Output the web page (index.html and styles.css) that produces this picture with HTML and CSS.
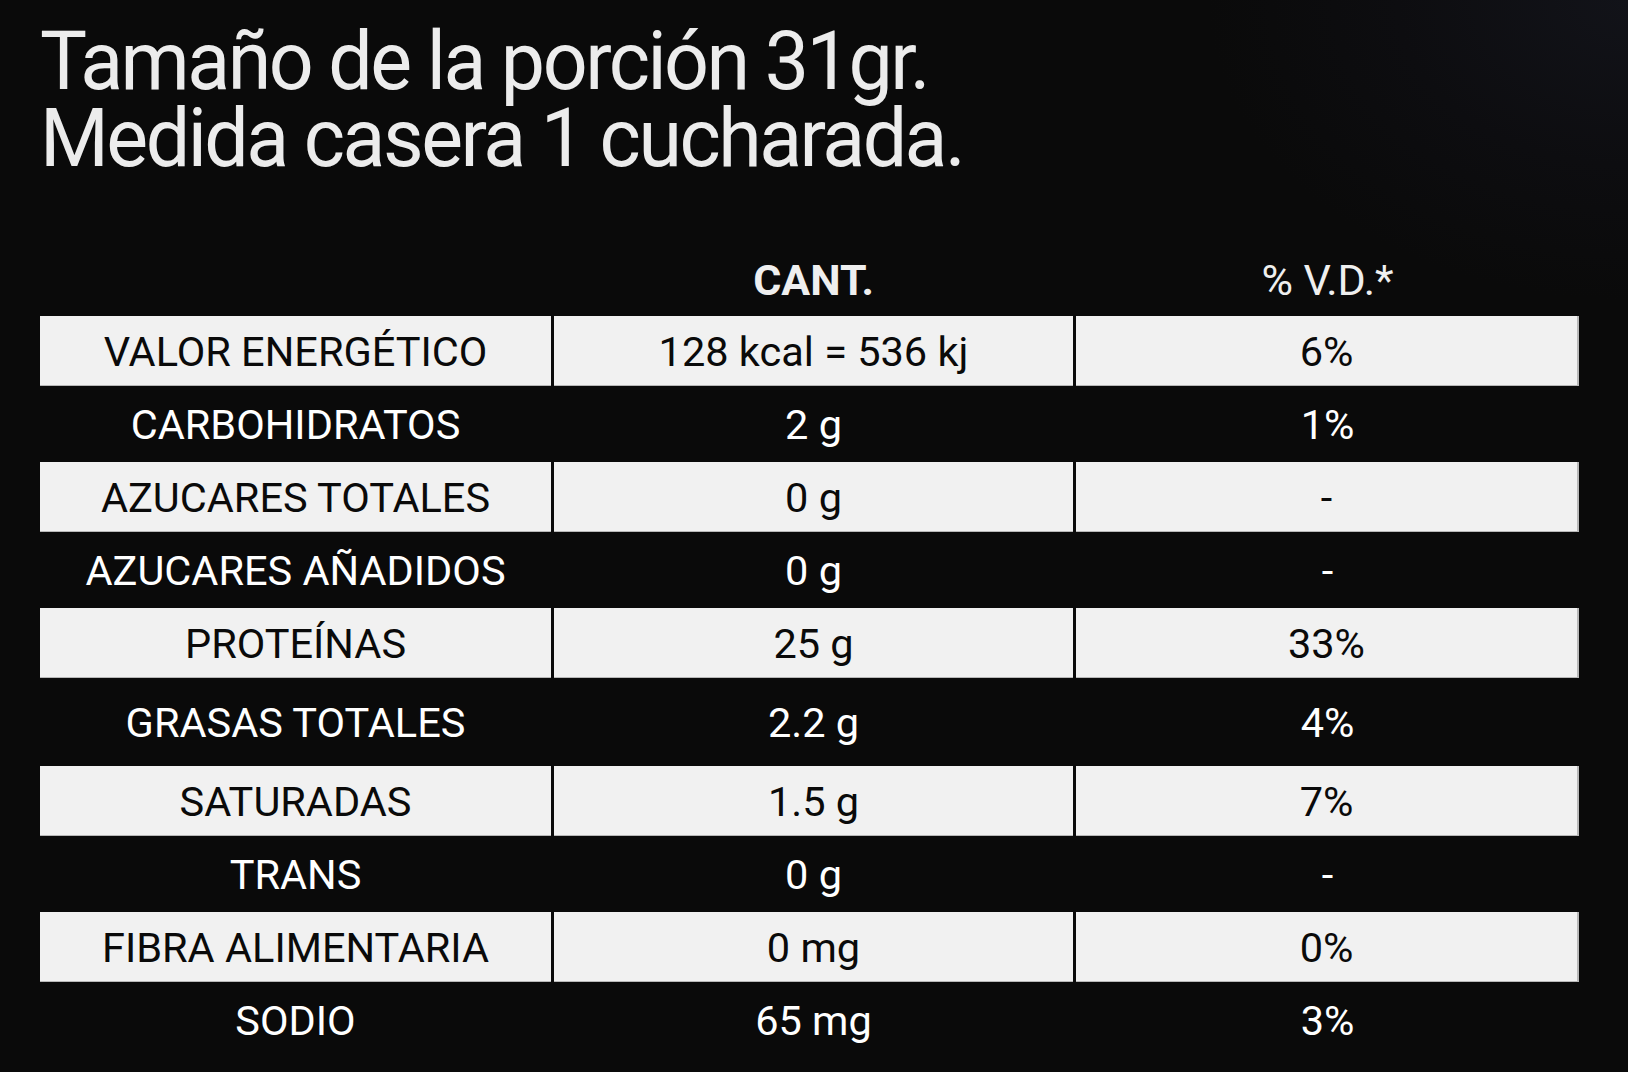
FILE: index.html
```html
<!DOCTYPE html>
<html lang="es">
<head>
<meta charset="utf-8">
<title>Información nutricional</title>
<link rel="stylesheet" href="styles.css">
</head>
<body>
<main class="page">
  <h1 class="title">Tamaño de la porción 31gr.<br>Medida casera 1 cucharada.</h1>
  <div class="table">
    <div class="row head">
      <div class="cell"></div>
      <div class="cell bold">CANT.</div>
      <div class="cell">% V.D.*</div>
    </div>
    <div class="row light">
      <div class="cell">VALOR ENERGÉTICO</div>
      <div class="cell">128 kcal = 536 kj</div>
      <div class="cell">6%</div>
    </div>
    <div class="row dark">
      <div class="cell">CARBOHIDRATOS</div>
      <div class="cell">2 g</div>
      <div class="cell">1%</div>
    </div>
    <div class="row light">
      <div class="cell">AZUCARES TOTALES</div>
      <div class="cell">0 g</div>
      <div class="cell">-</div>
    </div>
    <div class="row dark">
      <div class="cell">AZUCARES AÑADIDOS</div>
      <div class="cell">0 g</div>
      <div class="cell">-</div>
    </div>
    <div class="row light">
      <div class="cell">PROTEÍNAS</div>
      <div class="cell">25 g</div>
      <div class="cell">33%</div>
    </div>
    <div class="row dark tall">
      <div class="cell">GRASAS TOTALES</div>
      <div class="cell">2.2 g</div>
      <div class="cell">4%</div>
    </div>
    <div class="row light">
      <div class="cell">SATURADAS</div>
      <div class="cell">1.5 g</div>
      <div class="cell">7%</div>
    </div>
    <div class="row dark">
      <div class="cell">TRANS</div>
      <div class="cell">0 g</div>
      <div class="cell">-</div>
    </div>
    <div class="row light">
      <div class="cell">FIBRA ALIMENTARIA</div>
      <div class="cell">0 mg</div>
      <div class="cell">0%</div>
    </div>
    <div class="row dark">
      <div class="cell">SODIO</div>
      <div class="cell">65 mg</div>
      <div class="cell">3%</div>
    </div>
  </div>
</main>
</body>
</html>
```

FILE: styles.css
```css
html, body {
  margin: 0;
  padding: 0;
}
body {
  width: 1628px;
  height: 1072px;
  overflow: hidden;
  background: #0a0a0a;
  background-image: radial-gradient(ellipse 420px 300px at 100% 0%, #121319 0%, #0d0d10 55%, rgba(10,10,10,0) 100%);
  font-family: Roboto, "Liberation Sans", sans-serif;
}
.page {
  padding: 23px 0 0 40px;
}
.title {
  margin: 0;
  font-family: Roboto, "Liberation Sans", sans-serif;
  font-weight: 400;
  font-size: 82px;
  line-height: 77px;
  letter-spacing: -2.6px;
  color: #ececec;
  transform: scaleX(0.962);
  transform-origin: 0 0;
}
.table {
  margin-top: 63px;
  width: 1539px;
}
.row {
  display: grid;
  grid-template-columns: 511px 519px 503px;
  column-gap: 3px;
  height: 76px;
  font-size: 41.5px;
}
.cell {
  display: flex;
  align-items: center;
  justify-content: center;
  white-space: nowrap;
}
.head .cell {
  color: #efefef;
  font-size: 43px;
  padding-top: 4px;
  box-sizing: border-box;
}
.head .bold {
  font-weight: 700;
}
.light {
  height: 70px;
}
.light .cell {
  background: #f1f1f1;
  color: #0a0a0a;
  border-bottom: 1px solid #b8b8b8;
  box-sizing: border-box;
  padding-top: 2px;
}
.light .cell:last-child {
  border-right: 2px solid #b8b8b8;
}
.dark .cell {
  color: #ffffff;
}
.tall {
  height: 88px;
}
```
